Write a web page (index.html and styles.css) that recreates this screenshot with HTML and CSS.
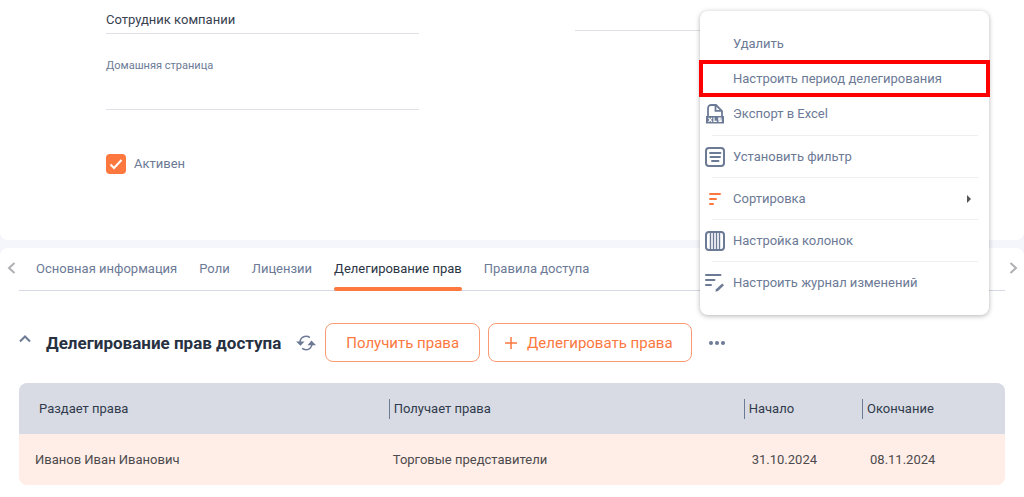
FILE: index.html
```html
<!DOCTYPE html>
<html lang="ru">
<head>
<meta charset="utf-8">
<meta name="viewport" content="width=device-width, initial-scale=1">
<title>Делегирование прав</title>
<link rel="stylesheet" href="styles.css">
</head>
<body>
<main class="page">
  <section class="card profile">
    <div class="profile-grid">
      <div class="column">
        <input class="field-input" type="text" value="Сотрудник компании" aria-label="Тип пользователя">
        <label class="field-label" for="homepage">Домашняя страница</label>
        <input class="field-input" id="homepage" type="text">
        <label class="check"><input class="check-box" type="checkbox" checked>Активен</label>
      </div>
      <div class="column column-side">
        <input class="field-input" type="text" aria-label="Дополнительное поле">
      </div>
    </div>
  </section>

  <section class="card details">
    <div class="tabs-row">
      <button class="scroll" type="button" aria-label="Назад"><svg width="9" height="12" viewBox="0 0 9 12"><path d="M7.500 1L2 6l5.500 5"/></svg></button>
      <nav class="tabs">
        <a class="tab" href="#info">Основная информация</a>
        <a class="tab" href="#roles">Роли</a>
        <a class="tab" href="#licenses">Лицензии</a>
        <a class="tab tab-active" href="#delegation" aria-current="page">Делегирование прав</a>
        <a class="tab" href="#rules">Правила доступа</a>
      </nav>
      <button class="scroll scroll-next" type="button" aria-label="Вперёд"><svg width="9" height="12" viewBox="0 0 9 12"><path d="M1.500 1L7 6l-5.500 5"/></svg></button>
    </div>

    <div class="toolbar">
      <button class="icon-button collapse" type="button" aria-label="Свернуть"><svg width="12" height="8" viewBox="0 0 12 8"><path d="M1 6.500L6 1.500l5 5" fill="none" stroke="currentColor" stroke-width="2"/></svg></button>
      <h2 class="title">Делегирование прав доступа</h2>
      <button class="icon-button refresh" type="button" aria-label="Обновить"><svg width="20" height="16" viewBox="0 0 20 16"><path d="M4 7.500C4 4 6.500 1.300 10 1.300c1.500 0 2.800.4 3.900 1.300M16 8.500c0 3.500-2.500 6.200-6 6.200-1.500 0-2.800-.4-3.900-1.300" fill="none" stroke="currentColor" stroke-width="1.500"/><path d="M0 6.500h8.500L4.500 10.800zM20 10.300h-8.500L15.500 5.500z" fill="currentColor"/></svg></button>
      <button class="button" type="button">Получить права</button>
      <button class="button button-add" type="button"><svg width="12" height="12" viewBox="0 0 12 12"><path d="M6 0v12M0 6h12" stroke="currentColor" stroke-width="1.500"/></svg>Делегировать права</button>
      <button class="icon-button more" type="button" aria-label="Ещё"><svg width="16" height="4" viewBox="0 0 16 4" fill="currentColor"><circle cx="2" cy="2" r="2"/><circle cx="8" cy="2" r="2"/><circle cx="14" cy="2" r="2"/></svg></button>
    </div>

    <table class="grid">
      <colgroup><col class="col-from"><col class="col-to"><col class="col-start"><col class="col-end"></colgroup>
      <thead><tr><th><span>Раздает права</span></th><th><span>Получает права</span></th><th><span>Начало</span></th><th><span>Окончание</span></th></tr></thead>
      <tbody><tr><td>Иванов Иван Иванович</td><td>Торговые представители</td><td>31.10.2024</td><td>08.11.2024</td></tr></tbody>
    </table>
  </section>

  <div class="menu" role="menu">
    <button class="item compact" role="menuitem" type="button"><span class="glyph"></span>Удалить</button>
    <button class="item compact marked" role="menuitem" type="button"><span class="glyph"></span>Настроить период делегирования</button>
    <button class="item compact export" role="menuitem" type="button"><span class="glyph"><svg width="20" height="20" viewBox="0 0 20 20"><path d="M3 12V4.500Q3 1 6.500 1H11l6 6v5M10.500 1.500v5.300h6" fill="none" stroke="currentColor" stroke-width="1.800"/><path d="M1 12h18v7.500H1z" fill="currentColor"/><path d="M3.500 13.800l3.500 4M7 13.800l-3.500 4M9 13.500v3.800h2.800M16.500 14.200h-2.700v1.600h2.400v1.500h-2.700" fill="none" stroke="#fff" stroke-width="1.200"/></svg></span>Экспорт в Excel</button>
    <hr class="rule">
    <button class="item" role="menuitem" type="button"><span class="glyph"><svg width="20" height="20" viewBox="0 0 20 20" fill="none" stroke="currentColor"><rect x="1" y="1" width="18" height="18" rx="3" stroke-width="2"/><path d="M5 6h10.500M5.500 10h9.500M7 14h6.500" stroke-width="1.900" stroke-linecap="round"/></svg></span>Установить фильтр</button>
    <hr class="rule">
    <button class="item" role="menuitem" type="button"><span class="glyph accent"><svg width="20" height="20" viewBox="0 0 20 20"><path d="M5 5h10M5 10h6M5 15h3" fill="none" stroke="currentColor" stroke-width="2" stroke-linecap="round"/></svg></span>Сортировка<svg class="arrow" width="4" height="8" viewBox="0 0 4 8"><path d="M0 0l4 4-4 4z" fill="#555"/></svg></button>
    <hr class="rule">
    <button class="item" role="menuitem" type="button"><span class="glyph"><svg width="20" height="20" viewBox="0 0 20 20" fill="none" stroke="currentColor"><rect x="1" y="1" width="18" height="18" rx="3" stroke-width="2"/><path d="M5.500 1v18M8.500 1v18M11.500 1v18M14.500 1v18" stroke-width="1.400"/></svg></span>Настройка колонок</button>
    <hr class="rule">
    <button class="item" role="menuitem" type="button"><span class="glyph"><svg width="20" height="20" viewBox="0 0 20 20"><path d="M1 2h14.500M1 7h8.500M1 12h5" fill="none" stroke="currentColor" stroke-width="2" stroke-linecap="round"/><path d="M10.500 18.800l.5-2.600 6.200-5.700 1.800 1.800-6 5.800z" fill="currentColor"/></svg></span>Настроить журнал изменений</button>
  </div>
</main>
</body>
</html>
```
FILE: styles.css
```css
* { box-sizing: border-box; }

body {
  margin: 0;
  background: #f5f6fb;
  color: #6c7a96;
  font: 13px/20px Roboto, "Noto Sans", sans-serif;
}

button, input { font: inherit; color: inherit; }
button { padding: 0; border: 0; background: none; }

.page {
  position: relative;
  display: flex;
  flex-direction: column;
  gap: 8px;
  min-height: 100vh;
}

.card { background: #fff; }
.profile { padding: 0 136px 64px 106px; border-radius: 0 0 8px 8px; }
.profile-grid { display: grid; grid-template-columns: 1fr 1fr; gap: 156px; }
.column { display: flex; flex-direction: column; align-items: stretch; padding-top: 6px; }
.column-side { padding-top: 3px; }

.field-input {
  width: 100%;
  height: 28px;
  padding: 0;
  border: 0;
  border-bottom: 1px solid #dfe1e8;
  outline: 0;
  background: none;
  color: #394150;
}
.field-label { margin-top: 22px; padding-bottom: 10px; font-size: 11px; line-height: 20px; }
.field-label + .field-input { height: 24px; }

.check { display: flex; align-items: center; gap: 8px; margin-top: 43px; height: 22px; margin-bottom: 1px; }
.check-box {
  appearance: none;
  width: 20px;
  height: 20px;
  margin: 0;
  border-radius: 4px;
  background: #fc783f url("data:image/svg+xml,%3Csvg xmlns='http://www.w3.org/2000/svg' viewBox='0 0 20 20'%3E%3Cpath d='M4.500 10.500l3.500 3.500 7.500-8' fill='none' stroke='white' stroke-width='2'/%3E%3C/svg%3E") center / 20px;
}

.details { flex: 1; border-radius: 8px 8px 0 0; }
.tabs-row { display: flex; height: 43px; }
.scroll { flex: none; width: 19px; padding: 0 0 3px 3px; color: #b0b0b4; }
.scroll-next { padding: 0 3px 3px 0; }
.scroll svg { display: block; margin: auto; fill: none; stroke: currentColor; stroke-width: 2; }
.tabs {
  display: flex;
  flex: 1;
  gap: 22px;
  padding-left: 17px;
  border-bottom: 1px solid #d5d9e4;
}
.tab { position: relative; height: 43px; padding-top: 11px; color: inherit; text-decoration: none; white-space: nowrap; }
.tab-active { color: #2b3444; }
.tab-active::after {
  content: "";
  position: absolute;
  inset: auto 0 0;
  height: 4px;
  border-radius: 2px;
  background: #fc783f;
}

.toolbar { display: flex; align-items: center; padding: 32px 19px 0; }
.icon-button { display: flex; }
.collapse { margin: 0 15px 8px 0; }
.title { margin: 0; color: #273142; font-size: 17px; line-height: 24px; font-weight: 700; white-space: nowrap; }
.refresh { margin: 0 9px 0 15px; }
.button {
  display: flex;
  align-items: center;
  justify-content: center;
  gap: 10px;
  height: 39px;
  margin-right: 8px;
  padding: 0 20px;
  border: 1px solid #fc9a73;
  border-radius: 8px;
  color: #fc783f;
  font-size: 15px;
  white-space: nowrap;
}
.button-add { padding: 0 18px 0 16px; }
.more { margin-left: 9px; }

.grid {
  width: calc(100% - 38px);
  margin: 21px 19px 12px;
  border-spacing: 0;
  border-radius: 8px;
  overflow: hidden;
  table-layout: fixed;
  text-align: left;
}
.col-from { width: 37.5%; }
.col-to { width: 36%; }
.col-start { width: 12%; }
.grid th, .grid td { height: 51px; padding: 0 4px; }
.grid th { padding: 0; background: #d8dbe3; color: #303a4c; font-weight: 400; }
.grid th span { display: block; padding-left: 4px; border-left: 1px solid #6c7a96; }
.grid th:first-child span { padding-left: 20px; border: 0; }
.grid td { background: #ffede7; color: #4c4a4c; }
.grid td:first-child { padding-left: 16px; }
.grid td:nth-child(n+3) { padding-left: 8px; }

.menu {
  position: absolute;
  top: 11px;
  right: 35px;
  width: 289px;
  padding: 15px 0 12px;
  border-radius: 8px;
  background: #fff;
  box-shadow: 0 1px 5px rgba(0, 0, 0, 0.3);
}
.item {
  display: flex;
  align-items: center;
  gap: 8px;
  width: 100%;
  height: 41px;
  padding: 0 18px 0 5px;
  text-align: left;
  white-space: nowrap;
}
.compact { height: 35px; }
.export { margin-bottom: 4px; }
.marked { outline: 4px solid #fe0000; outline-offset: -3px; }
.glyph { flex: none; width: 20px; height: 20px; }
.glyph svg { display: block; }
.accent { color: #fc783f; }
.arrow { margin-left: auto; }
.rule { height: 1px; margin: 0 11px 0 12px; border: 0; background: #eeeff1; }
```
